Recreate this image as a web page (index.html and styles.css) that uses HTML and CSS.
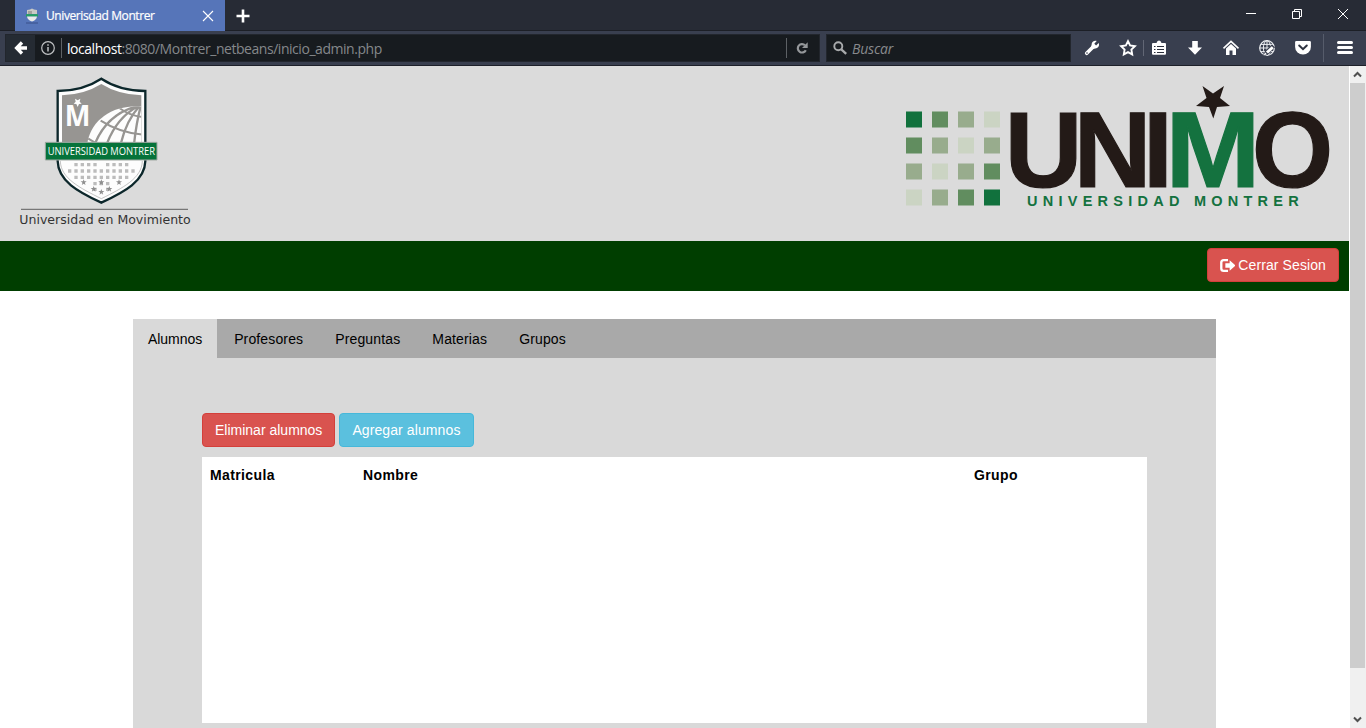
FILE: index.html
```html
<!DOCTYPE html>
<html lang="es">
<head>
<meta charset="utf-8">
<title>Univerisdad Montrer</title>
<link rel="stylesheet" href="styles.css">
</head>
<body>
<div class="browser">
  <div class="titlebar">
    <div class="tab">
      <svg class="favicon" viewBox="0 0 14 16">
        <path d="M2 2L5 1.500 7 0.500 9 1.500 12 2V6H2Z" fill="#c9c9c5"/>
        <path d="M3 3h4v3H3z" fill="#a2a29d"/>
        <path d="M1 6.200h12v2.300H1z" fill="#22a060"/>
        <path d="M2 8.500h10Q11.500 12 7 13.500 2.500 12 2 8.500Z" fill="#e8eae8"/>
        <path d="M1 15h12" stroke="#39518a" stroke-width="1"/>
      </svg>
      <span class="tab-title">Univerisdad Montrer</span>
      <svg class="tab-close" viewBox="0 0 12 12"><path d="M1 1l10 10M11 1L1 11" stroke="#fff" stroke-width="1.100"/></svg>
    </div>
    <svg class="new-tab" viewBox="0 0 14 14"><path d="M7 .5v13M.5 7h13" stroke="#fff" stroke-width="2.600"/></svg>
    <div class="window-buttons">
      <svg viewBox="0 0 12 12"><path d="M1 5.500h10" stroke="#fff"/></svg>
      <svg viewBox="0 0 12 12"><path d="M1.500 3.500h7v7h-7zM3.500 3.500v-2h7v7h-2" fill="none" stroke="#fff"/></svg>
      <svg viewBox="0 0 12 12"><path d="M1 1l10 10M11 1L1 11" stroke="#fff"/></svg>
    </div>
  </div>
  <div class="toolbar">
    <div class="urlbar">
      <div class="back"><svg viewBox="0 0 14 14"><path d="M8 1.500L2.600 7 8 12.500M3 7H13" fill="none" stroke="#fff" stroke-width="3.300"/></svg></div>
      <svg class="info" viewBox="0 0 14 14"><circle cx="7" cy="7" r="6.300" fill="none" stroke="#bfc1c3" stroke-width="1.200"/><path d="M7 3.200v1.600M7 6v4.600" stroke="#bfc1c3" stroke-width="1.500"/></svg>
      <i class="url-sep"></i>
      <span class="url"><b>localhost</b>:8080/Montrer_netbeans/inicio_admin.php</span>
      <i class="reload-sep"></i>
      <svg class="reload" viewBox="0 0 12 12"><path d="M9 3.300A4.200 4.200 0 1 0 9.800 8.200" fill="none" stroke="#95989b" stroke-width="2.200"/><path d="M11.700 .3V6H6Z" fill="#95989b"/></svg>
    </div>
    <div class="search">
      <svg viewBox="0 0 14 14"><circle cx="5.300" cy="5.300" r="4" fill="none" stroke="#a8aaac" stroke-width="1.900"/><path d="M8.300 8.300l4.900 4.600" stroke="#a8aaac" stroke-width="2.300"/></svg>
      <span>Buscar</span>
    </div>
    <div class="tools">
      <svg class="wrench" viewBox="0 0 18 18"><path d="M3.700 14.300L10 8" stroke="#fff" stroke-width="3.600" stroke-linecap="round"/><path d="M15.700 4.100l-2.600 2.400-1.800-1.800L13.700 2C11.500 1.300 8.500 2.500 8.600 5.700L8 8.200l1.800 1.900 2.500-.7C15.500 9.300 16.700 6.500 15.700 4.100Z" fill="#fff"/><circle cx="4" cy="14.100" r=".8" fill="#393f4f"/></svg>
      <svg class="star" viewBox="0 0 18 18"><path d="M9 2.200l2.100 4.300 4.800.7-3.500 3.400.8 4.800L9 13.100l-4.200 2.300.8-4.800L2.100 7.200l4.800-.7Z" fill="none" stroke="#fff" stroke-width="1.900"/></svg>
      <i class="tool-sep"></i>
      <svg class="list" viewBox="0 0 18 18"><path d="M3 4h3.500Q7 1.500 9 1.500T11.500 4H15q1 0 1 1v9.800q0 1-1 1H3q-1 0-1-1V5q0-1 1-1Z" fill="#fff"/><path d="M4 7.500h1.500M7 7.500h7M4 10.500h1.500M7 10.500h7M4 13.500h1.500M7 13.500h7" stroke="#2c303c" stroke-width="1.200"/></svg>
      <svg viewBox="0 0 18 18"><path d="M6.200 2h5.600v6.600H16L9 15.800 2 8.600h4.200Z" fill="#fff"/></svg>
      <svg viewBox="0 0 18 18"><path d="M1.500 9.300L9 2.400l7.500 6.900" fill="none" stroke="#fff" stroke-width="1.600"/><path d="M4 9.600L9 5l5 4.600V16h-3.500v-4.500h-3V16H4Z" fill="#fff"/></svg>
      <svg viewBox="0 0 18 18"><g fill="none" stroke="#eceef1"><circle cx="9" cy="9" r="7.300" stroke-width="1.200"/><ellipse cx="9" cy="9" rx="3.600" ry="7.300"/><path d="M9 1.700v14.600M1.700 9h14.600M2.700 5.400h12.600M2.700 12.600h12.600"/></g><path d="M5 17l2-5 7-6.500 3 3L9.500 16Z" fill="#393f4f"/><path d="M5.600 16.600l1.500-3.200 1.800 1.800ZM8 12.500l5.800-5.300 2 2L10 14.500Z" fill="#fff"/></svg>
      <svg viewBox="0 0 18 18"><path d="M2.300 2h13.400q1.200 0 1.200 1.200V8a7.900 7.500 0 0 1-15.800 0V3.200Q1.100 2 2.300 2Z" fill="#fff"/><path d="M5.200 6.500L9 10.200l3.800-3.700" fill="none" stroke="#2e3340" stroke-width="2" stroke-linecap="round"/></svg>
      <i class="menu-sep"></i>
      <svg viewBox="0 0 18 18"><path d="M2.500 3.500h13M2.500 8.500h13M2.500 13.500h13" stroke="#fff" stroke-width="3" stroke-linecap="round"/></svg>
    </div>
  </div>

  <div class="viewport">
    <div class="page">
      <header class="banner">
        <svg class="crest" viewBox="0 0 630 525">
          <defs>
            <path id="spark" d="M0-9L2.300-3H9L3.600 1.200 5.600 8 0 4-5.600 8-3.600 1.200-9-3H-2.300Z"/>
            <clipPath id="globe"><path d="M262 229C276 158 340 116 424 121V229Z"/></clipPath>
          </defs>
          <path d="M304 38Q250 74 173 75V285C174 345 235 378 304 410C373 378 435 345 436 285V75Q358 74 304 38Z" fill="#fdfdfd" stroke="#0c272b" stroke-width="7"/>
          <path d="M304 54Q252 86 186 88V229H424V88Q356 86 304 54Z" fill="#979592"/>
          <g clip-path="url(#globe)">
            <path d="M255 100H430V230H255Z" fill="#fdfdfd"/>
            <g fill="none" stroke="#979592" stroke-width="7">
              <path d="M284 235Q320 145 410 121M320 235Q350 155 414 121M362 235Q378 165 418 121M402 235Q409 170 422 121"/>
              <path d="M358 126Q390 150 430 153M302 164Q360 201 430 206M260 215L290 233" stroke-width="6"/>
            </g>
          </g>
          <text x="194" y="181" class="crest-m" textLength="77" lengthAdjust="spacingAndGlyphs">M</text>
          <path transform="translate(233 110)" d="M-8-12L0-7 8-12 6-3 12 3 4 4 0 13-4 4-12 3-6-3Z" fill="#fdfdfd"/>
          <path d="M181 285C182 337 240 366 304 398C368 366 426 337 427 285" fill="none" stroke="#a4a4a4" stroke-width="2"/>
          <g stroke="#bcbcbc" stroke-width="10" fill="none">
            <path d="M223 296H290M318 296H385" stroke-dasharray="10 9"/>
            <path d="M204 315H404" stroke-dasharray="10 9"/>
            <path d="M223 334H385" stroke-dasharray="10 9"/>
            <path d="M280 353H290M299 353H309M318 353H328M280 370H290M318 370H328"/>
          </g>
          <g fill="#8f8f8f">
            <use href="#spark" x="251" y="349"/><use href="#spark" x="304" y="349"/><use href="#spark" x="357" y="349"/>
            <use href="#spark" x="281" y="369"/><use href="#spark" x="328" y="369"/><use href="#spark" x="304" y="378"/>
          </g>
          <path d="M136 229H471V282H136Z" fill="#05733a" stroke="#a2aaa4" stroke-width="3"/>
          <text x="143" y="266" class="crest-name" textLength="322" lengthAdjust="spacingAndGlyphs">UNIVERSIDAD MONTRER</text>
          <path d="M63 430H564" stroke="#777" stroke-width="4"/>
          <text x="58" y="473" class="crest-motto" textLength="514" lengthAdjust="spacingAndGlyphs">Universidad en Movimiento</text>
        </svg>
        <svg class="unimo" viewBox="890 66 459 175">
          <g transform="translate(0 -.4)">
            <path d="M906 112h16v16h-16zM984 190h16v16h-16z" fill="#11713d"/>
            <path d="M932 112h16v16h-16zM906 138h16v16h-16zM984 164h16v16h-16zM958 190h16v16h-16z" fill="#618d5f"/>
            <path d="M958 112h16v16h-16zM932 138h16v16h-16zM984 138h16v16h-16zM906 164h16v16h-16zM958 164h16v16h-16zM932 190h16v16h-16z" fill="#98ac8d"/>
            <path d="M984 112h16v16h-16zM958 138h16v16h-16zM932 164h16v16h-16zM906 190h16v16h-16z" fill="#cbd4c3"/>
          </g>
          <g class="unimo-word">
            <text x="1004.800" y="187">U</text>
            <text x="1073.800" y="187">N</text>
            <text x="1142.900" y="187">I</text>
            <text class="green" transform="translate(1165.500 187) scale(1.060 1)">M</text>
            <text transform="translate(1252 187) scale(.970 1)">O</text>
          </g>
          <path d="M1202.500 86L1213 93.500 1224 86 1220 98 1230 106 1217 107 1213.300 118.500 1209 107 1196 106 1206.500 98Z" fill="#231a17"/>
          <text class="unimo-sub" x="1027" y="206">UNIVERSIDAD MONTRER</text>
        </svg>
      </header>
      <div class="greenbar">
        <button class="btn danger">
          <svg class="logout" viewBox="0 0 14 14"><path d="M7.500 2H3.500Q1.200 2 1.200 4.200v5.600Q1.200 12 3.500 12h4" fill="none" stroke="#fff" stroke-width="2.200"/><path d="M5 5h4V2L14.500 7 9 12V9H5Z" fill="#fff"/></svg>
          Cerrar Sesion
        </button>
      </div>
      <main class="panel">
        <nav class="tabs">
          <a class="active">Alumnos</a><a>Profesores</a><a>Preguntas</a><a>Materias</a><a>Grupos</a>
        </nav>
        <section class="content">
          <div class="actions">
            <button class="btn danger remove">Eliminar alumnos</button>
            <button class="btn info-btn">Agregar alumnos</button>
          </div>
          <div class="table">
            <span>Matricula</span><span>Nombre</span><span>Grupo</span>
          </div>
        </section>
      </main>
    </div>
    <div class="scrollbar">
      <svg viewBox="0 0 15 17"><path d="M4 10.500L7.500 7l3.500 3.500" fill="none" stroke="#505050" stroke-width="2"/></svg>
      <div class="thumb"></div>
      <svg class="down" viewBox="0 0 15 17"><path d="M4 6.500L7.500 10 11 6.500" fill="none" stroke="#505050" stroke-width="2"/></svg>
    </div>
  </div>
</div>
</body>
</html>
```
FILE: styles.css
```css
* { box-sizing: border-box; }
body { margin: 0; overflow: hidden; font: 14px/20px "Liberation Sans", Arial, sans-serif; color: #000; }
svg { display: block; flex: none; }
.browser { display: flex; flex-direction: column; width: 1366px; height: 728px; }

/* window chrome */
.titlebar { display: flex; align-items: flex-start; height: 31px; padding-left: 15px; background: #272b35; border-bottom: 1px solid #1c1f26; }
.tab { display: flex; align-items: center; width: 210px; height: 31px; padding: 0 11px 0 10px; background: #5675b9; color: #fff; }
.favicon { width: 14px; height: 16px; }
.tab-title { flex: 1; margin-left: 7px; font: 12px/16px "Open Sans", "Noto Sans", sans-serif; letter-spacing: -.4px; white-space: nowrap; -webkit-text-stroke: .2px #fff; }
.tab-close { width: 12px; height: 12px; }
.new-tab { width: 14px; height: 14px; margin: 9px 0 0 11px; }
.window-buttons { display: flex; gap: 34px; margin: 8px 17px 0 auto; }
.window-buttons svg { width: 12px; height: 12px; }
.toolbar { display: flex; height: 35px; padding: 3px 0 0 5px; background: #393f4f; border-bottom: 1px solid #1d2029; }
.urlbar { display: flex; align-items: center; width: 815px; height: 28px; background: #171b1f; border: 1px solid #22262d; }
.back { display: flex; align-items: center; justify-content: center; width: 29px; height: 26px; background: #252b33; }
.back svg { width: 14px; height: 14px; }
.info { width: 14px; height: 14px; margin-left: 6px; }
.url-sep { width: 1px; height: 20px; margin-left: 6px; background: #5d6165; }
.url { flex: 1; margin-left: 5px; padding-top: 2px; font: 14px/20px "Open Sans", "Noto Sans", sans-serif; letter-spacing: -.46px; color: #85888b; white-space: nowrap; }
.url b { font-weight: 400; color: #fff; }
.reload-sep { width: 1px; height: 20px; background: #5d6165; }
.reload { width: 12px; height: 12px; margin: 0 11px 0 9px; }
.search { display: flex; align-items: center; width: 245px; height: 28px; margin-left: 6px; padding-left: 6px; background: #171b1f; border: 1px solid #22262d; }
.search svg { width: 14px; height: 14px; margin-bottom: 1px; }
.search span { margin-left: 5px; padding-top: 2px; font: italic 14px/20px "Open Sans", "Noto Sans", sans-serif; letter-spacing: -.2px; color: #888a8d; }
.tools { display: flex; align-items: center; height: 28px; margin-left: 12px; gap: 18px; }
.tools svg { width: 18px; height: 18px; }
.tool-sep { width: 1px; height: 16px; margin: 0 -12px; background: #626775; }
.menu-sep { width: 1px; height: 28px; margin: 0 -6px 0 -7px; background: #565c6b; }

/* page */
.viewport { display: flex; flex: 1; min-height: 0; background: #fff; }
.page { display: flex; flex-direction: column; width: 1349px; overflow: hidden; }
.banner { display: flex; justify-content: space-between; height: 175px; flex: none; background: #dbdbdb; }
.crest { width: 210px; height: 175px; }
.crest-m { font: 700 84px "Open Sans", sans-serif; fill: #fdfdfd; }
.crest-name { font: 30px "Open Sans", sans-serif; fill: #fff; }
.crest-motto { font: 36px "DejaVu Sans", sans-serif; fill: #333; }
.unimo { width: 459px; height: 175px; }
.unimo-word { font: bold 107.5px "Liberation Sans", Arial, sans-serif; fill: #231a17; stroke: #231a17; stroke-width: 1.2px; }
.unimo-word .green { fill: #14723f; stroke: #14723f; }
.unimo-sub { font: bold 14.5px "Liberation Sans", Arial, sans-serif; letter-spacing: 5.25px; fill: #14723f; }
.greenbar { display: flex; align-items: flex-start; justify-content: flex-end; flex: none; height: 50px; padding: 7px 10px 0 0; background: #003e00; }
.btn { display: inline-flex; align-items: center; height: 34px; padding: 0 12px; border: 1px solid; border-radius: 4px; font: 14px/20px "Liberation Sans", Arial, sans-serif; letter-spacing: .1px; color: #fff; white-space: nowrap; }
.danger { background: #d9534f; border-color: #d43f3a; }
.remove { letter-spacing: 0; }
.info-btn { background: #5bc0de; border-color: #46b8da; }
.logout { width: 15px; height: 15px; margin-right: 3px; }
.panel { flex: 1; width: 1083px; margin: 28px 0 0 133px; background: #d9d9d9; }
.tabs { display: flex; gap: 2px; height: 39px; background: #a9a9a9; }
.tabs a { padding: 10px 15px; letter-spacing: .14px; }
.tabs .active { background: #d9d9d9; letter-spacing: -.05px; }
.content { padding: 55px 69px 0; }
.actions { display: flex; gap: 4px; }
.table { display: grid; grid-template-columns: 153px 611px 1fr; height: 266px; margin-top: 10px; padding: 8px; background: #fff; font-weight: 700; letter-spacing: .38px; }
.scrollbar { display: flex; flex-direction: column; width: 17px; padding: 0 1px 0 0; background: #f0f0f0; border-left: 1px solid #fff; }
.scrollbar svg { width: 15px; height: 17px; }
.thumb { height: 585px; background: #cdcdcd; }
.down { margin-top: auto; }
```
